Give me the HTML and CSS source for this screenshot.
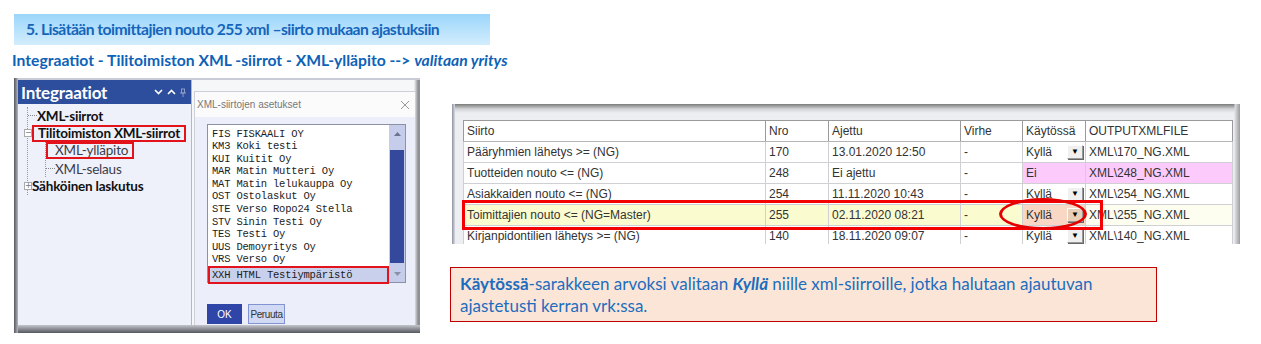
FILE: index.html
```html
<!DOCTYPE html>
<html lang="fi">
<head>
<meta charset="utf-8">
<title>XML-siirto ajastus</title>
<link rel="stylesheet" href="styles.css">
</head>
<body>
<div class="page">
  <div class="heading">5. Lisätään toimittajien nouto 255 xml –siirto mukaan ajastuksiin</div>
  <div class="path">Integraatiot - Tilitoimiston XML -siirrot - XML-ylläpito --&gt; <em>valitaan yritys</em></div>
  <div class="shots">
    <div class="shot-left">
      <div class="nav">
        <div class="nav-head">
          <span class="nav-title">Integraatiot</span>
          <span class="nav-icons">
            <svg width="9" height="6" viewBox="0 0 9 6"><path d="M1 1l3.5 3.5L8 1" fill="none" stroke="#fff" stroke-width="1.6"/></svg>
            <svg width="9" height="6" viewBox="0 0 9 6"><path d="M1 5l3.5-3.5L8 5" fill="none" stroke="#fff" stroke-width="1.6"/></svg>
            <svg width="6" height="9" viewBox="0 0 6 9"><path d="M1 1h4M1.5 1v4h3V1M0 5h6M3 5v4" fill="none" stroke="#8d9cc8" stroke-width="1"/></svg>
          </span>
        </div>
        <div class="tree">
          <div class="tree-root">
            <div class="t-row"><span class="conn"></span><span class="t-bold">XML-siirrot</span></div>
            <div class="t-row"><span class="pm">−</span><span class="t-bold boxed">Tilitoimiston XML-siirrot</span></div>
            <div class="t-sub">
              <div class="t-row"><span class="t-norm boxed sub">XML-ylläpito</span></div>
              <div class="t-row"><span class="conn"></span><span class="t-norm">XML-selaus</span></div>
            </div>
            <div class="t-row"><span class="pm">+</span><span class="t-bold">Sähköinen laskutus</span></div>
          </div>
        </div>
      </div>
      <div class="dlg-area">
        <div class="dialog">
          <div class="dlg-title">
            <span>XML-siirtojen asetukset</span>
            <svg width="10" height="10" viewBox="0 0 10 10"><path d="M1 1l8 8M9 1L1 9" stroke="#9a9a9a" stroke-width="1"/></svg>
          </div>
          <div class="dlg-body">
            <div class="listbox">
              <div class="list-items">
                <div class="li">FIS FISKAALI OY</div>
                <div class="li">KM3 Koki testi</div>
                <div class="li">KUI Kuitit Oy</div>
                <div class="li">MAR Matin Mutteri Oy</div>
                <div class="li">MAT Matin lelukauppa Oy</div>
                <div class="li">OST Ostolaskut Oy</div>
                <div class="li">STE Verso Ropo24 Stella</div>
                <div class="li">STV Sinin Testi Oy</div>
                <div class="li">TES Testi Oy</div>
                <div class="li">UUS Demoyritys Oy</div>
                <div class="li">VRS Verso Oy</div>
                <div class="li selected">XXH HTML Testiympäristö</div>
              </div>
              <div class="scrollbar">
                <div class="sb-arrow"><svg width="7" height="4" viewBox="0 0 7 4"><path d="M0 4L3.5 0L7 4z" fill="#6c7390"/></svg></div>
                <div class="sb-track"><div class="sb-thumb"></div></div>
                <div class="sb-arrow"><svg width="7" height="4" viewBox="0 0 7 4"><path d="M0 0L3.5 4L7 0z" fill="#8a90a8"/></svg></div>
              </div>
            </div>
            <div class="buttons">
              <span class="btn btn-ok">OK</span>
              <span class="btn btn-cancel">Peruuta</span>
            </div>
          </div>
        </div>
      </div>
    </div>

    <div class="right">
      <div class="shot-table">
        <table class="grid">
          <colgroup>
            <col class="c1"><col class="c2"><col class="c3"><col class="c4"><col class="c5"><col class="c6">
          </colgroup>
          <thead>
            <tr><th>Siirto</th><th>Nro</th><th>Ajettu</th><th>Virhe</th><th>Käytössä</th><th>OUTPUTXMLFILE</th></tr>
          </thead>
          <tbody>
            <tr><td>Pääryhmien lähetys &gt;= (NG)</td><td>170</td><td>13.01.2020 12:50</td><td>-</td><td class="dd">Kyllä<span class="ddbtn">▼</span></td><td>XML\170_NG.XML</td></tr>
            <tr><td>Tuotteiden nouto &lt;= (NG)</td><td>248</td><td>Ei ajettu</td><td>-</td><td class="pink">Ei</td><td class="pink">XML\248_NG.XML</td></tr>
            <tr><td>Asiakkaiden nouto &lt;= (NG)</td><td>254</td><td>11.11.2020 10:43</td><td>-</td><td class="dd">Kyllä<span class="ddbtn">▼</span></td><td>XML\254_NG.XML</td></tr>
            <tr class="hl"><td>Toimittajien nouto &lt;= (NG=Master)</td><td>255</td><td>02.11.2020 08:21</td><td>-</td><td class="dd active">Kyllä<span class="ddbtn">▼</span></td><td class="plain">XML\255_NG.XML</td></tr>
            <tr><td>Kirjanpidontilien lähetys &gt;= (NG)</td><td>140</td><td>18.11.2020 09:07</td><td>-</td><td class="dd">Kyllä<span class="ddbtn">▼</span></td><td>XML\140_NG.XML</td></tr>
          </tbody>
        </table>
        <div class="mark-rect"></div>
        <div class="mark-ellipse"></div>
      </div>
      <div class="note">
        <b>Käytössä</b>-sarakkeen arvoksi valitaan <b><i>Kyllä</i></b> niille xml-siirroille, jotka halutaan ajautuvan<br>ajastetusti kerran vrk:ssa.
      </div>
    </div>
  </div>
</div>
</body>
</html>
```

FILE: styles.css
```css
* { box-sizing: border-box; }
html, body { margin: 0; padding: 0; background: #fff; }
body { width: 1261px; height: 344px; overflow: hidden; font-family: "Lato", "Noto Sans", sans-serif; }

.page { padding: 14px 0 0 14px; }

.heading {
  width: 476px;
  height: 31px;
  background: linear-gradient(to bottom, #9bd6fb, #d3edfd);
  color: #1565bb;
  font-weight: 700;
  font-size: 15.7px;
  letter-spacing: -0.55px;
  line-height: 31px;
  padding-left: 12px;
}

.path {
  margin: 6px 0 0 -2px;
  height: 18px;
  line-height: 18px;
  color: #0d62b7;
  font-weight: 700;
  font-size: 15.7px;
  letter-spacing: 0;
}
.path em { font-style: italic; }

.shots { display: flex; margin-top: 9px; }

/* ---------- left screenshot ---------- */
.shot-left {
  width: 406px;
  height: 255px;
  display: flex;
  padding: 2px 0 8px 4px;
  background:
    linear-gradient(to right, #54575e 0, #b3b6be 4px, transparent 4px),
    linear-gradient(to top, #54575e 0, #c4c6cc 8px, transparent 8px),
    #c9ccd4;
}
.nav {
  width: 174px;
  background: #eef0fa;
  border-right: 1px solid #b4b8c4;
  display: flex;
  flex-direction: column;
}
.nav-head {
  height: 24px;
  background: #2c4e9c;
  display: flex;
  align-items: center;
  justify-content: space-between;
  padding: 0 5px 0 3px;
}
.nav-title { color: #fff; font-weight: 700; font-size: 17px; letter-spacing: -0.2px; }
.nav-icons { display: flex; align-items: center; gap: 4px; }

.tree { padding: 3px 0 0 9px; color: #111; font-size: 13.5px; letter-spacing: -0.2px; }
.tree-root { border-left: 1px dotted #999; }
.t-row { display: flex; align-items: center; height: 17.6px; }
.conn { width: 9px; border-top: 1px dotted #888; }
.pm {
  width: 8px; height: 8px;
  margin-left: -4px;
  border: 1px solid #aaa;
  font-size: 8px; line-height: 6px;
  color: #777;
  text-align: center;
  background: #fff;
  font-family: "DejaVu Sans", sans-serif;
}
.t-sub { margin-left: 17px; border-left: 1px dotted #999; }
.t-bold { font-weight: 700; }
.t-norm { color: #3c3c4a; }
.boxed { border: 2px solid #e3131b; padding: 0 4px; line-height: 13px; }
.boxed.sub { padding-left: 7px; }

.dlg-area {
  flex: 1;
  background: linear-gradient(to right, #f6f7f9 0, #f6f7f9 222px, #8e9095 226px);
  padding: 11px 4px 0 2px;
}
.dialog {
  height: 100%;
  background: #eceff9;
  border: 1px solid #cdd0d8;
  border-bottom: none;
  display: flex;
  flex-direction: column;
}
.dlg-title {
  height: 25px;
  background: #fbfbfc;
  display: flex;
  align-items: center;
  justify-content: space-between;
  padding: 0 5px 0 2px;
  font-family: "Liberation Sans", sans-serif;
  font-size: 10px;
  color: #777;
}
.dlg-body { padding: 7px 0 0 12px; }
.listbox {
  width: 199px;
  height: 159px;
  border: 1px solid #8c92a6;
  background: #fff;
  display: flex;
}
.list-items { flex: 1; padding-top: 2.5px; }
.li {
  height: 12.6px;
  line-height: 12.6px;
  padding-left: 4px;
  font-family: "Liberation Mono", "DejaVu Sans Mono", monospace;
  font-size: 10.5px;
  letter-spacing: -0.2px;
  color: #1c1c1c;
  white-space: nowrap;
}
.li.selected {
  height: 18px;
  line-height: 14px;
  background: #c9d0ec;
  border: 2px solid #e3131b;
  padding-left: 2px;
}
.scrollbar {
  width: 16px;
  background: #c6cdeb;
  display: flex;
  flex-direction: column;
}
.sb-arrow { height: 17px; display: flex; align-items: center; justify-content: center; }
.sb-track { flex: 1; padding-top: 8px; padding-bottom: 2px; }
.sb-thumb { height: 100%; background: #34499b; margin: 0 1px; }

.buttons { display: flex; gap: 6px; margin-top: 21px; }
.btn {
  height: 20px;
  display: flex; align-items: center; justify-content: center;
  font-family: "Liberation Sans", sans-serif;
  font-size: 10px;
}
.btn-ok { width: 35px; background: #2f45a8; color: #fff; }
.btn-cancel { width: 37px; background: #d2d9f4; border: 1px solid #8293d3; color: #333; letter-spacing: -0.4px; }

/* ---------- right ---------- */
.right { margin-left: 30px; padding-top: 26px; }
.shot-table {
  position: relative;
  margin-left: 2px;
  width: 788px;
  height: 140px;
  overflow: hidden;
  padding: 16px 0 0 11px;
  background:
    linear-gradient(to left, #9a9ca0 0, #dcdde0 5px, transparent 6px),
    linear-gradient(to right, #8d929f 0, #d9dbe0 3px, transparent 3px),
    linear-gradient(to bottom, #7a7a7a 0, #d3d4d6 5px, #eceef1 9px, #eceef1 100%);
}
.grid {
  border-collapse: collapse;
  table-layout: fixed;
  width: 769px;
  font-family: "Liberation Sans", Arial, sans-serif;
  font-size: 12px;
  color: #333;
  background: #fff;
}
.c1 { width: 302px; } .c2 { width: 63px; } .c3 { width: 132px; }
.c4 { width: 62px; } .c5 { width: 63px; } .c6 { width: 147px; }
.grid th, .grid td {
  height: 21px;
  padding: 0 3px;
  border: 1px solid #cfd0d4;
  text-align: left;
  font-weight: 400;
  white-space: nowrap;
  overflow: hidden;
}
.grid th { border-color: #9a9a9a; border-bottom-color: #b5b5b5; }
.grid thead tr { border: 1px solid #9a9a9a; }
.grid td.pink { background: #fccbfb; }
.grid tr.hl td { background: #fbfbd0; }
.grid tr.hl td.plain { background: #fdfdf0; }
.grid tr.hl td.active { background: #f8d8c4; }
.dd { position: relative; }
.ddbtn {
  position: absolute;
  right: 2px; top: 3px;
  width: 16px; height: 14px;
  background: #f0f0f0;
  border: 1px solid #999;
  border-top-color: #fff; border-left-color: #fff;
  box-shadow: 1px 1px 0 #666;
  font-size: 8px; line-height: 12px;
  text-align: center; color: #000;
}
.active .ddbtn { background: #e8d0b8; }

.mark-rect {
  position: absolute;
  left: 10px; top: 96px;
  width: 641px; height: 30px;
  border: 3px solid #f40000;
}
.mark-ellipse {
  position: absolute;
  left: 547px; top: 94px;
  width: 88px; height: 32px;
  border: 3px solid #e50000;
  border-radius: 50%;
}

.note {
  margin-top: 23px;
  width: 707px;
  height: 55px;
  background: #fbe5d7;
  border: 1px solid #c00000;
  padding: 5px 9px;
  color: #1d6dbf;
  font-size: 17px;
  line-height: 22px;
  letter-spacing: 0;
}
.note b { font-weight: 700; }
```
